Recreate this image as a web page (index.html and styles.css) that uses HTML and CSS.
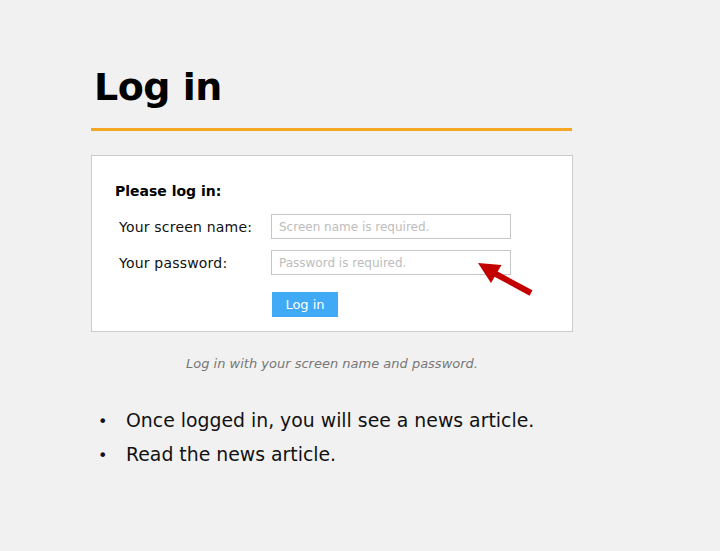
FILE: index.html
```html
<!DOCTYPE html>
<html lang="en">
<head>
<meta charset="utf-8">
<title>Log in</title>
<link rel="stylesheet" href="styles.css">
</head>
<body>
<main class="page">
  <h1 class="title">Log in</h1>
  <div class="rule"></div>
  <section class="card">
    <h2 class="card-title">Please log in:</h2>
    <form class="form-grid">
      <label class="label" for="sn">Your screen name:</label>
      <input class="field" id="sn" type="text" placeholder="Screen name is required.">
      <label class="label" for="pw">Your password:</label>
      <input class="field" id="pw" type="password" placeholder="Password is required.">
    </form>
    <button class="btn" type="button">Log in</button>
  </section>
  <p class="caption">Log in with your screen name and password.</p>
  <ul class="notes">
    <li class="note">Once logged in, you will see a news article.</li>
    <li class="note">Read the news article.</li>
  </ul>
  <svg class="arrow" width="70" height="50" viewBox="0 0 70 50" aria-hidden="true">
    <line x1="24" y1="23" x2="61" y2="43" stroke="#c30000" stroke-width="6"/>
    <polygon points="8,13 31.5,15 21,33" fill="#c30000"/>
  </svg>
</main>
</body>
</html>
```
FILE: styles.css
```css
html, body {
  margin: 0;
  padding: 0;
  background: #f1f1f1;
}

body {
  font-family: "DejaVu Sans", Verdana, sans-serif;
  color: #111;
}

.page {
  position: relative;
  padding: 65px 0 40px 91px;
}

.title {
  margin: 0;
  padding-left: 3px;
  font-size: 38px;
  line-height: 44px;
  font-weight: bold;
  letter-spacing: -0.5px;
  color: #000;
}

.rule {
  width: 481px;
  height: 3px;
  margin-top: 19px;
  background: #f5a623;
}

.card {
  box-sizing: border-box;
  width: 482px;
  margin-top: 24px;
  padding: 27px 0 14px 23px;
  background: #fff;
  border: 1px solid #cccccc;
}

.card-title {
  margin: 0;
  font-size: 14px;
  line-height: 16px;
  font-weight: bold;
  color: #000;
}

.form-grid {
  display: grid;
  grid-template-columns: 156px 240px;
  grid-auto-rows: 25px;
  row-gap: 11px;
  margin: 15px 0 0;
}

.label {
  display: flex;
  align-items: center;
  padding-left: 4px;
  font-size: 14px;
  letter-spacing: 0.2px;
  color: #111;
}

.field {
  box-sizing: border-box;
  width: 240px;
  height: 25px;
  margin: 0;
  padding: 0 7px;
  border: 1px solid #c6c6c6;
  border-radius: 0;
  background: #fff;
  font-family: "DejaVu Sans", Verdana, sans-serif;
  font-size: 12px;
  color: #333;
  outline: none;
}

.field::placeholder {
  color: #bdbdbd;
}

.btn {
  display: block;
  box-sizing: border-box;
  width: 66px;
  height: 25px;
  margin: 17px 0 0 157px;
  padding: 0;
  border: none;
  border-radius: 0;
  background: #40aaf7;
  color: #fff;
  font-family: "DejaVu Sans", Verdana, sans-serif;
  font-size: 13px;
}

.caption {
  width: 482px;
  margin: 24px 0 0;
  text-align: center;
  font-size: 13px;
  line-height: 15px;
  font-style: italic;
  color: #777;
}

.notes {
  list-style: none;
  margin: 33px 0 0;
  padding: 0;
}

.note {
  display: flex;
  align-items: baseline;
  font-size: 18.85px;
  line-height: 33px;
  color: #111;
}

.note::before {
  content: "•";
  box-sizing: border-box;
  width: 35px;
  padding-left: 7px;
  font-size: 16px;
}

.arrow {
  position: absolute;
  left: 470px;
  top: 250px;
}
```
